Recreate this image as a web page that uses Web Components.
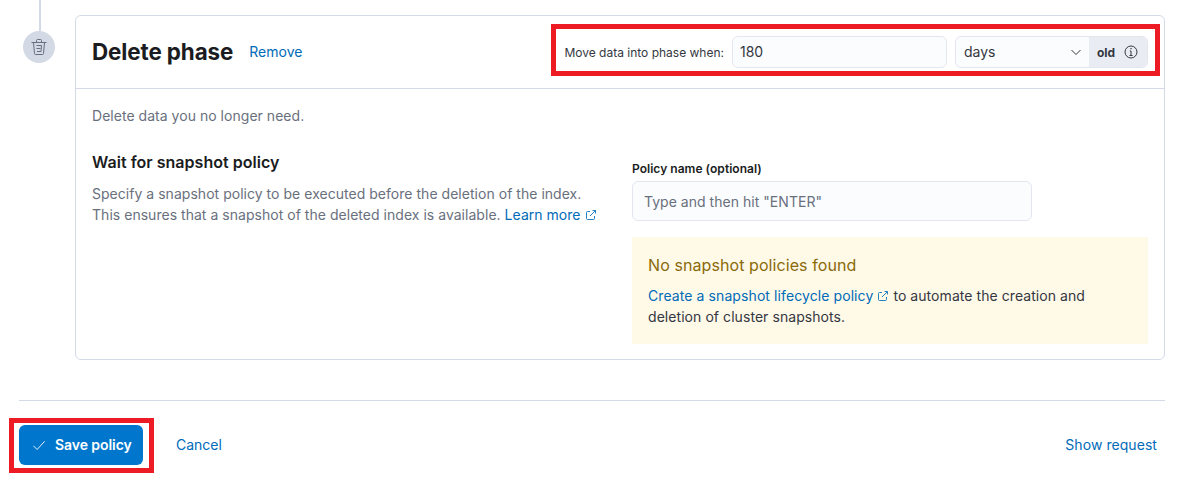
<!DOCTYPE html>
<html lang="en">
<head>
<meta charset="utf-8">
<title>Delete phase</title>
<style>
    html, body { margin: 0; padding: 0; background: #fff; }
    body { font-family: Inter, "Liberation Sans", sans-serif; font-size: 14px; color: #343741; }
</style>
</head>
<body>
<policy-page></policy-page>

<script>
const popout = `<svg width="12" height="12" viewBox="0 0 12 12" fill="none" stroke="currentColor" stroke-width="1" style="vertical-align:-1px;opacity:.85"><path d="M5 2.500H2.500a1 1 0 0 0-1 1v6a1 1 0 0 0 1 1h6a1 1 0 0 0 1-1V7"/><path d="M5 7l5.500-5.500M7.500 1.500h3v3"/></svg>`;

class RedFrame extends HTMLElement {
    connectedCallback() {
        this.attachShadow({mode: "open"}).innerHTML = `
            <style>
                :host { display: block; position: relative; }
                i { position: absolute; inset: var(--frame-inset); border: 5px solid #ed1c24; pointer-events: none; }
            </style>
            <slot></slot>
            <i></i>
        `;
    }
}

class PhaseDot extends HTMLElement {
    connectedCallback() {
        this.attachShadow({mode: "open"}).innerHTML = `
            <style>
                :host { display: block; flex: none; width: 75px; }
                .line { width: 2px; height: 31px; margin-left: 39px; background: #d3dae6; }
                .dot {
                    width: 32px; height: 32px; margin-left: 23px; border-radius: 50%;
                    background: #d3dae6; display: flex; align-items: center; justify-content: center;
                }
            </style>
            <div class="line"></div>
            <div class="dot">
                <svg width="16" height="16" viewBox="0 0 16 16" fill="none" stroke="#69707d" stroke-width="1">
                    <path d="M.5 3.500h15M5.500 3.500V1.500a1 1 0 0 1 1-1h3a1 1 0 0 1 1 1v2"/>
                    <path d="M2.500 3.500l1 11a1 1 0 0 0 1 1h7a1 1 0 0 0 1-1l1-11"/>
                    <path d="M5.500 6.500h5M5.500 9.500h4M6 12.500h4M10.500 6.500l-.5 6"/>
                </svg>
            </div>
        `;
    }
}

class TimingControl extends HTMLElement {
    connectedCallback() {
        this.attachShadow({mode: "open"}).innerHTML = `
            <style>
                :host { display: flex; align-items: center; font-size: 14px; color: #343741; }
                .lead { font-size: 12px; color: #343741; margin-right: 8px; white-space: nowrap; }
                .box {
                    height: 32px; box-sizing: border-box; border: 1px solid #e3e6ef; border-radius: 6px;
                    background: #fbfcfd; display: flex; align-items: center;
                }
                .num { width: 215px; padding: 0 0 1px 7px; margin-right: 8px; }
                .sel { width: 193px; overflow: hidden; }
                .sel span { flex: 1; padding: 0 0 1px 8px; }
                .chev { margin-right: 7px; }
                .append {
                    height: 100%; width: 58px; box-sizing: border-box; padding-left: 8px; background: #e9edf3;
                    display: flex; align-items: center; gap: 9px; font-size: 12px; font-weight: 700; color: #343741;
                }
            </style>
            <div class="lead">Move data into phase when:</div>
            <div class="box num">180</div>
            <div class="box sel">
                <span>days</span>
                <svg class="chev" width="12" height="12" viewBox="0 0 12 12" fill="none" stroke="#343741"><path d="M1.500 4l4.500 4.500L10.500 4"/></svg>
                <div class="append">old
                    <svg width="14" height="14" viewBox="0 0 14 14" fill="none" stroke="#343741"><circle cx="7" cy="7" r="6"/><path d="M5.500 10.500h3M7 10.500V6H5.800"/><path d="M6.400 3.700h1.200" stroke-width="1.300"/></svg>
                </div>
            </div>
        `;
    }
}

class DeletePhase extends HTMLElement {
    connectedCallback() {
        this.attachShadow({mode: "open"}).innerHTML = `
            <style>
                :host {
                    display: block; flex: 1; height: 345px; box-sizing: border-box; margin-top: 15px;
                    border: 1px solid #d3dae6; border-radius: 6px; background: #fff;
                }
                a { color: #006bb8; text-decoration: none; }
                header {
                    height: 73px; box-sizing: border-box; padding: 0 16px; border-bottom: 1px solid #d3dae6;
                    display: flex; align-items: center;
                }
                h2 { margin: 0 16px 2px 0; font-size: 22.400px; font-weight: 700; color: #1a1c21; letter-spacing: -.1px; }
                .remove { flex: 1; margin-bottom: 2px; }
                .body { padding: 16px 16px 0; letter-spacing: .03px; }
                .intro { line-height: 21px; color: #69707d; }
                .cols { display: flex; margin-top: 24px; }
                .left { width: 540px; }
                h3 { margin: 0 0 9px; font-size: 16px; line-height: 24px; font-weight: 600; color: #1a1c21; }
                .left p { margin: 0; line-height: 21px; color: #69707d; white-space: nowrap; }
                .right { width: 516px; padding-top: 11px; }
                label { display: block; font-size: 12px; line-height: 16px; font-weight: 600; color: #1a1c21; margin-bottom: 4px; }
                .field {
                    width: 400px; height: 40px; box-sizing: border-box; padding-left: 11px;
                    display: flex; align-items: center; color: #69707d;
                    border: 1px solid #e3e6ef; border-radius: 6px; background: #fbfcfd;
                }
                .callout { margin-top: 16px; height: 107px; box-sizing: border-box; padding: 16px; background: #fff9e8; }
                .callout h4 { margin: 0 0 8px; font-size: 16px; line-height: 24px; font-weight: 400; color: #8a6a0a; letter-spacing: .08px; }
                .callout p { margin: 0; line-height: 21px; color: #343741; letter-spacing: .06px; }
                .callout a { letter-spacing: .09px; }
            </style>
            <header>
                <h2>Delete phase</h2>
                <a class="remove" href="#">Remove</a>
                <red-frame style="--frame-inset: -12px -12px -8px -13px"><timing-control></timing-control></red-frame>
            </header>
            <div class="body">
                <div class="intro">Delete data you no longer need.</div>
                <div class="cols">
                    <div class="left">
                        <h3>Wait for snapshot policy</h3>
                        <p>Specify a snapshot policy to be executed before the deletion of the index.<br>
                        This ensures that a snapshot of the deleted index is available. <a href="#">Learn more ${popout}</a></p>
                    </div>
                    <div class="right">
                        <label>Policy name (optional)</label>
                        <div class="field">Type and then hit "ENTER"</div>
                        <div class="callout">
                            <h4>No snapshot policies found</h4>
                            <p><a href="#">Create a snapshot lifecycle policy ${popout}</a> <span>to automate the creation and</span><br>deletion of cluster snapshots.</p>
                        </div>
                    </div>
                </div>
            </div>
        `;
    }
}

class PolicyFooter extends HTMLElement {
    connectedCallback() {
        this.attachShadow({mode: "open"}).innerHTML = `
            <style>
                :host { display: block; margin-top: 40px; padding-top: 24px; border-top: 1px solid #d3dae6; }
                .row { display: flex; align-items: center; }
                a { color: #006bb8; text-decoration: none; padding-bottom: 2px; }
                .save {
                    width: 124px; height: 40px; box-sizing: border-box; padding: 0 0 1px 14px; border-radius: 6px;
                    background: #0077cc; color: #fff; font-weight: 600; letter-spacing: -.06px;
                    display: flex; align-items: center; gap: 10px;
                }
                .cancel { flex: 1; margin-left: 33px; }
                .show { margin-right: 8px; letter-spacing: .06px; }
            </style>
            <div class="row">
                <red-frame style="--frame-inset: -7px -11px -8px -10px">
                    <div class="save">
                        <svg width="12" height="12" viewBox="0 0 16 16" fill="none" stroke="#fff" stroke-width="1.200"><path d="M.5 9l5 5L15.500 3"/></svg>
                        Save policy
                    </div>
                </red-frame>
                <a class="cancel" href="#">Cancel</a>
                <a class="show" href="#">Show request</a>
            </div>
        `;
    }
}

class PolicyPage extends HTMLElement {
    connectedCallback() {
        this.attachShadow({mode: "open"}).innerHTML = `
            <style>
                :host { display: block; padding: 0 21px 12px 0; }
                .phase { display: flex; }
                policy-footer { margin-left: 19px; }
            </style>
            <div class="phase">
                <phase-dot></phase-dot>
                <delete-phase></delete-phase>
            </div>
            <policy-footer></policy-footer>
        `;
    }
}

customElements.define("red-frame", RedFrame);
customElements.define("phase-dot", PhaseDot);
customElements.define("timing-control", TimingControl);
customElements.define("delete-phase", DeletePhase);
customElements.define("policy-footer", PolicyFooter);
customElements.define("policy-page", PolicyPage);
</script>
</body>
</html>
